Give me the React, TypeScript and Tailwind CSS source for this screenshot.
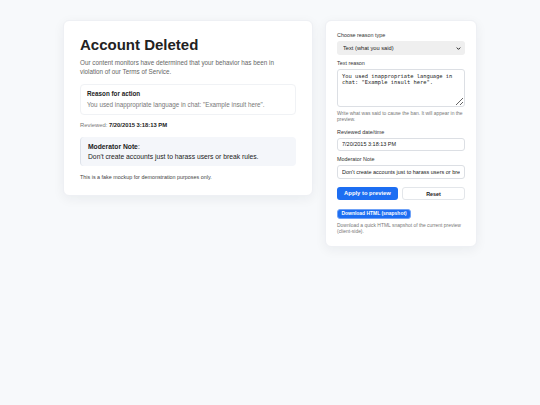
import { useState } from "react";

const DEFAULT_REASON = 'You used inappropriate language in chat: "Example insult here".';
const DEFAULT_DATE = "7/20/2015 3:18:13 PM";
const DEFAULT_NOTE = "Don't create accounts just to harass users or break rules.";

function Label({ children }: { children: React.ReactNode }) {
  return <div className="mb-[2px] text-[5.4px] leading-[7px] text-[#333]">{children}</div>;
}

export default function App() {
  const [reason, setReason] = useState(DEFAULT_REASON);
  const [date, setDate] = useState(DEFAULT_DATE);
  const [note, setNote] = useState(DEFAULT_NOTE);
  const [preview, setPreview] = useState({ reason, date, note });

  const apply = () => setPreview({ reason, date, note });
  const reset = () => {
    setReason(DEFAULT_REASON);
    setDate(DEFAULT_DATE);
    setNote(DEFAULT_NOTE);
    setPreview({ reason: DEFAULT_REASON, date: DEFAULT_DATE, note: DEFAULT_NOTE });
  };

  return (
    <div className="min-h-[405px] w-full bg-[#f7f9fb] font-['Liberation_Sans',Arial,sans-serif] text-[#222]">
      <div className="mx-auto flex w-[414px] items-start gap-[12px] pt-[20px]">
        {/* Preview */}
        <div className="w-[250px] shrink-0 rounded-[6px] border border-[#eef0f4] bg-white px-[16px] pt-[16px] pb-[14px] shadow-[0_3px_12px_rgba(20,30,50,0.06)]">
          <h1 className="text-[15px] leading-[16px] font-bold text-[#222]">Account Deleted</h1>
          <p className="mt-[4.5px] text-[6.3px] leading-[9px] text-[#666]">
            Our content monitors have determined that your behavior has been in violation of our Terms of
            Service.
          </p>

          <div className="mt-[8.5px] rounded-[4px] border border-[#f0f2f5] bg-white px-[6px] pt-[5px] pb-[5px]">
            <div className="text-[6.3px] leading-[8px] font-bold text-[#222]">Reason for action</div>
            <div className="mt-[3px] text-[6.3px] leading-[8px] text-[#777]">{preview.reason}</div>
          </div>

          <div className="mt-[6px] text-[5.85px] leading-[8px] text-[#777]">
            Reviewed: <span className="font-bold text-[#222]">{preview.date}</span>
          </div>

          <div className="mt-[7.5px] rounded-[4px] border-l-[1.5px] border-[#dde2ea] bg-[#f4f6fa] pt-[5px] pr-[6px] pb-[5px] pl-[7px]">
            <div className="text-[6.75px] leading-[9px] text-[#222]">
              <span className="font-bold">Moderator Note</span>:
            </div>
            <div className="mt-[1px] text-[6.75px] leading-[9px] text-[#222]">{preview.note}</div>
          </div>

          <p className="mt-[8.5px] text-[5.4px] leading-[7px] text-[#444]">
            This is a fake mockup for demonstration purposes only.
          </p>
        </div>

        {/* Controls */}
        <div className="w-[152px] shrink-0 rounded-[6px] border border-[#eef0f4] bg-white px-[11px] pt-[10.5px] pb-[11.5px] shadow-[0_3px_12px_rgba(20,30,50,0.06)]">
          <Label>Choose reason type</Label>
          <div className="relative">
            <select className="block h-[14.7px] w-full appearance-none rounded-[3px] bg-[#efefef] pl-[6px] text-[5.7px] leading-[14px] text-[#222] outline-none">
              <option>Text (what you said)</option>
              <option>Image</option>
              <option>Username</option>
            </select>
            <svg
              viewBox="0 0 10 10"
              className="pointer-events-none absolute top-[5px] right-[4px] h-[5px] w-[5px]"
            >
              <path d="M1.5 3.2 L5 6.7 L8.5 3.2" fill="none" stroke="#222" strokeWidth="2" />
            </svg>
          </div>

          <div className="mt-[4.5px]">
            <Label>Text reason</Label>
          </div>
          <textarea
            value={reason}
            onChange={(e) => setReason(e.target.value)}
            className="block h-[38px] w-full rounded-[3px] border border-[#dcdfe4] px-[4px] pt-[3px] font-['DejaVu_Sans_Mono','Liberation_Mono',monospace] text-[5.4px] leading-[6.7px] text-[#222] outline-none"
          />
          <p className="mt-[4.5px] text-[4.95px] leading-[5.7px] text-[#777]">
            Write what was said to cause the ban. It will appear in the preview.
          </p>

          <div className="mt-[6px]">
            <Label>Reviewed date/time</Label>
          </div>
          <input
            value={date}
            onChange={(e) => setDate(e.target.value)}
            className="block h-[13.7px] w-full rounded-[3px] border border-[#dcdfe4] px-[4px] text-[5.5px] text-[#222] outline-none"
          />

          <div className="mt-[5px]">
            <Label>Moderator Note</Label>
          </div>
          <input
            value={note}
            onChange={(e) => setNote(e.target.value)}
            className="block h-[13.7px] w-full rounded-[3px] border border-[#dcdfe4] px-[4px] text-[5.5px] text-[#222] outline-none"
          />

          <div className="mt-[8.5px] flex gap-[4px]">
            <button
              onClick={apply}
              className="h-[12.7px] flex-1 rounded-[3px] bg-[#1d6ef2] text-[5.85px] font-bold text-white"
            >
              Apply to preview
            </button>
            <button
              onClick={reset}
              className="h-[12.7px] flex-1 rounded-[3px] border border-[#e3e6ea] bg-white text-[5.4px] font-bold text-[#222]"
            >
              Reset
            </button>
          </div>

          <button className="mt-[8.5px] block h-[10.7px] rounded-[3px] border border-[#6fa2f7] bg-[#1d6ef2] px-[3.5px] text-[4.95px] font-bold text-white">
            Download HTML (snapshot)
          </button>
          <p className="mt-[3.5px] text-[4.95px] leading-[5.7px] text-[#777]">
            Download a quick HTML snapshot of the current preview (client-side).
          </p>
        </div>
      </div>
    </div>
  );
}
